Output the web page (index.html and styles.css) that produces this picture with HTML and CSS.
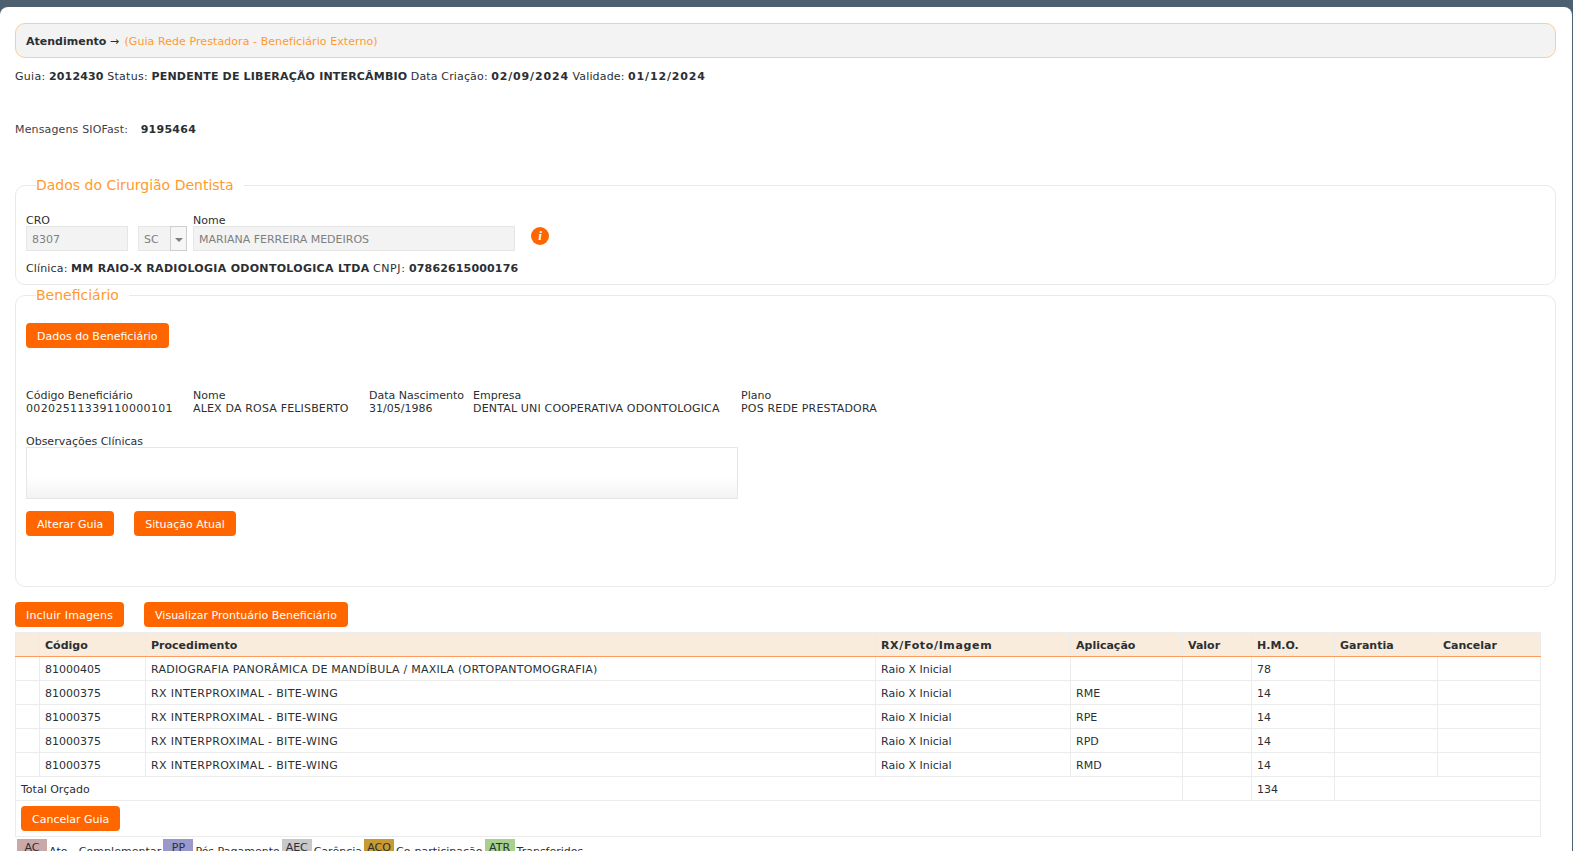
FILE: index.html
```html
<!DOCTYPE html>
<html lang="pt-BR">
<head>
<meta charset="utf-8">
<title>Atendimento</title>
<link rel="stylesheet" href="styles.css">
</head>
<body>
<main class="page">
  <div class="crumb"><b>Atendimento</b> <span class="crumb-arrow">→</span> <span class="crumb-sub">(Guia Rede Prestadora - Beneficiário Externo)</span></div>
  <p class="status"><span class="w">Guia:</span> <b class="num">2012430</b> <span class="w">Status:</span> <b>PENDENTE DE LIBERAÇÃO INTERCÂMBIO</b> <span class="n">Data Criação:</span> <b class="date">02/09/2024</b> <span class="n">Validade:</span> <b class="date">01/12/2024</b></p>
  <p class="msgs">Mensagens SIOFast: <b class="msg-num">9195464</b></p>

  <fieldset class="box box-dentist">
    <legend>Dados do Cirurgião Dentista</legend>
    <div class="form-row">
      <div class="field">
        <label>CRO</label>
        <div class="input w-cro">8307</div>
      </div>
      <div class="field">
        <label>&nbsp;</label>
        <div class="select"><span class="select-val">SC</span><span class="select-btn"><i class="caret"></i></span></div>
      </div>
      <div class="field">
        <label>Nome</label>
        <div class="input w-nome">MARIANA FERREIRA MEDEIROS</div>
      </div>
      <span class="info">i</span>
    </div>
    <p class="clinic"><span class="clinic-label">Clínica:</span> <b class="clinic-name">MM RAIO-X RADIOLOGIA ODONTOLOGICA LTDA</b> <span class="cnpj-label">CNPJ:</span> <b class="num">07862615000176</b></p>
  </fieldset>

  <fieldset class="box box-benef">
    <legend>Beneficiário</legend>
    <div class="btn-row first"><button class="btn">Dados do Beneficiário</button></div>
    <div class="benef-grid">
      <div><div>Código Beneficiário</div><div class="code">00202511339110000101</div></div>
      <div><div>Nome</div><div class="caps">ALEX DA ROSA FELISBERTO</div></div>
      <div><div>Data Nascimento</div><div>31/05/1986</div></div>
      <div><div>Empresa</div><div class="caps">DENTAL UNI COOPERATIVA ODONTOLOGICA</div></div>
      <div><div>Plano</div><div class="caps">POS REDE PRESTADORA</div></div>
    </div>
    <div class="obs-label">Observações Clínicas</div>
    <div class="obs"></div>
    <div class="btn-row actions"><button class="btn">Alterar Guia</button><button class="btn">Situação Atual</button></div>
  </fieldset>

  <div class="btn-row top-actions"><button class="btn btn-wide">Incluir Imagens</button><button class="btn">Visualizar Prontuário Beneficiário</button></div>

  <table class="grid">
    <colgroup>
      <col class="c1"><col class="c2"><col class="c3"><col class="c4"><col class="c5"><col class="c6"><col class="c7"><col class="c8"><col class="c9">
    </colgroup>
    <thead>
      <tr><th></th><th>Código</th><th>Procedimento</th><th class="th-rx">RX/Foto/Imagem</th><th>Aplicação</th><th>Valor</th><th>H.M.O.</th><th>Garantia</th><th>Cancelar</th></tr>
    </thead>
    <tbody>
      <tr><td></td><td>81000405</td><td class="proc-long">RADIOGRAFIA PANORÂMICA DE MANDÍBULA / MAXILA (ORTOPANTOMOGRAFIA)</td><td>Raio X Inicial</td><td></td><td></td><td>78</td><td></td><td></td></tr>
      <tr><td></td><td>81000375</td><td class="proc">RX INTERPROXIMAL - BITE-WING</td><td>Raio X Inicial</td><td>RME</td><td></td><td>14</td><td></td><td></td></tr>
      <tr><td></td><td>81000375</td><td class="proc">RX INTERPROXIMAL - BITE-WING</td><td>Raio X Inicial</td><td>RPE</td><td></td><td>14</td><td></td><td></td></tr>
      <tr><td></td><td>81000375</td><td class="proc">RX INTERPROXIMAL - BITE-WING</td><td>Raio X Inicial</td><td>RPD</td><td></td><td>14</td><td></td><td></td></tr>
      <tr><td></td><td>81000375</td><td class="proc">RX INTERPROXIMAL - BITE-WING</td><td>Raio X Inicial</td><td>RMD</td><td></td><td>14</td><td></td><td></td></tr>
      <tr><td colspan="5">Total Orçado</td><td></td><td>134</td><td colspan="2"></td></tr>
      <tr class="row-btn"><td colspan="9"><button class="btn">Cancelar Guia</button></td></tr>
    </tbody>
  </table>

  <div class="legend-row">
    <span class="tag tag-ac">AC</span><span class="tag-text text-ato">Ato - Complementar</span>
    <span class="tag tag-pp">PP</span><span class="tag-text">Pós Pagamento</span>
    <span class="tag tag-aec">AEC</span><span class="tag-text">Carência</span>
    <span class="tag tag-aco">ACO</span><span class="tag-text">Co-participação</span>
    <span class="tag tag-atr">ATR</span><span class="tag-text">Transferidos</span>
  </div>
</main>
</body>
</html>
```

FILE: styles.css
```css
* { box-sizing: border-box; }
html, body { height: 100%; overflow: hidden; }
body {
  margin: 0;
  background: #4d6070;
  color: #2b2f33;
  font: 11px/13px "DejaVu Sans", Verdana, sans-serif;
}
b { font-weight: 700; }
p { margin: 0; }
.page {
  height: 900px;
  margin: 7px 1px 0 0;
  padding: 16px 16px 0 15px;
  background: #fff;
  border-radius: 8px 8px 0 0;
}
.crumb {
  height: 35px;
  padding-left: 10px;
  line-height: 35px;
  background: #f3f3f3;
  border: 1px solid #f3cfa5;
  border-radius: 10px;
}
.crumb-arrow { margin-right: 2px; }
.crumb-sub { color: #ff9a2e; letter-spacing: .07px; }
.status { margin-top: 12px; }
.status b { letter-spacing: .18px; }
.status .num { letter-spacing: .15px; }
.status .date { letter-spacing: .85px; }
.status .n { letter-spacing: .15px; }
.status .w { letter-spacing: .3px; }
.msgs { margin-top: 40px; color: #4a3a44; letter-spacing: .15px; }
.msg-num { margin-left: 9px; color: #2b2f33; letter-spacing: .25px; }
.box {
  margin: 0;
  padding: 0 10px;
  border: 1px solid #e9e9e9;
  border-radius: 10px;
  min-width: 0;
}
.box legend {
  margin-left: 10px;
  padding: 0 10px 0 0;
  color: #ff9a2e;
  font-size: 14px;
  line-height: 20px;
}
.box-dentist { height: 110px; margin-top: 39px; }
.box-benef { height: 302px; margin-top: 0; }
.form-row { display: flex; align-items: flex-start; margin-top: 19px; }
.field label { display: block; height: 13px; line-height: 13px; }
.input, .select {
  height: 25px;
  line-height: 25px;
  margin-top: -1px;
  background: #f3f3f3;
  border: 1px solid #e6e6e6;
  color: #808080;
}
.input { padding-left: 5px; }
.w-cro { width: 102px; margin-right: 10px; }
.w-nome { width: 322px; }
.select { display: flex; width: 49px; margin-right: 6px; }
.select-val { flex: 1; padding-left: 5px; }
.select-btn {
  display: flex;
  width: 17px;
  margin: -1px -1px -1px 0;
  padding-top: 3px;
  align-items: center;
  justify-content: center;
  background: #f6f6f6;
  border: 1px solid #cfcfcf;
}
.caret {
  width: 0;
  height: 0;
  border: 4px solid transparent;
  border-top: 4px solid #808080;
  border-bottom: 0;
}
.info {
  width: 18px;
  height: 18px;
  margin: 13px 0 0 16px;
  background: #ff6600;
  border-radius: 50%;
  color: #fff;
  font: italic 700 13px/18px "Liberation Serif", serif;
  text-align: center;
}
.clinic { margin-top: 11px; }
.clinic-label { letter-spacing: .15px; }
.clinic-name { letter-spacing: .3px; }
.cnpj-label { letter-spacing: .6px; }
.clinic .num { letter-spacing: .15px; }
.btn {
  height: 25px;
  padding: 3px 11px 0;
  background: #ff6600;
  border: 0;
  border-radius: 4px;
  color: #fff;
  font: inherit;
  line-height: 22px;
}
.btn-wide { letter-spacing: .17px; }
.btn-row { display: flex; gap: 20px; }
.btn-row.first { margin-top: 18px; }
.benef-grid {
  display: grid;
  grid-template-columns: 167px 176px 104px 268px auto;
  margin-top: 41px;
}
.code { letter-spacing: .35px; }
.caps { letter-spacing: .17px; }
.obs-label { margin-top: 20px; }
.obs {
  width: 712px;
  height: 52px;
  margin-top: -1px;
  background: linear-gradient(#fff 55%, #f3f3f3);
  border: 1px solid #e6e6e6;
}
.actions { margin-top: 12px; }
.top-actions { margin-top: 15px; }
.grid {
  width: 1525px;
  margin-top: 5px;
  border-collapse: collapse;
  table-layout: fixed;
}
.c1 { width: 24px; }
.c2 { width: 106px; }
.c3 { width: 730px; }
.c4 { width: 195px; }
.c5 { width: 112px; }
.c6 { width: 69px; }
.c7 { width: 83px; }
.c8 { width: 103px; }
.c9 { width: 103px; }
.grid th, .grid td {
  height: 24px;
  padding: 2px 5px 0;
  border: 1px solid #ececec;
  text-align: left;
  font-weight: 400;
}
.grid th {
  background: #f9ecdc;
  border-bottom: 1px solid #ff9a5c;
  font-weight: 700;
}
.th-rx { letter-spacing: .65px; }
.proc { letter-spacing: .35px; }
.proc-long { letter-spacing: .23px; }
.row-btn td { height: 36px; padding-top: 0; }
.legend-row {
  display: flex;
  align-items: flex-start;
  gap: 2px;
  margin: 2px 0 0 2px;
}
.tag-text { padding-top: 6px; }
.text-ato { letter-spacing: .06px; }
.tag {
  width: 30px;
  height: 24px;
  padding-top: 2px;
  text-align: center;
}
.tag-ac { background: #c9a8a8; }
.tag-pp { background: #9999cc; }
.tag-aec { background: #c8c8c8; }
.tag-aco { background: #c89a33; }
.tag-atr { background: #a9d08e; }
```
